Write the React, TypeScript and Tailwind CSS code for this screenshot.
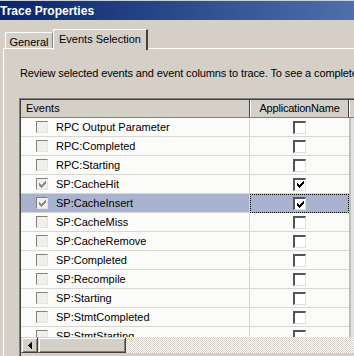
import React from "react";

const rows = [
  { name: "RPC Output Parameter", ev: false, app: false },
  { name: "RPC:Completed", ev: false, app: false },
  { name: "RPC:Starting", ev: false, app: false },
  { name: "SP:CacheHit", ev: true, app: true },
  { name: "SP:CacheInsert", ev: true, app: true, sel: true },
  { name: "SP:CacheMiss", ev: false, app: false },
  { name: "SP:CacheRemove", ev: false, app: false },
  { name: "SP:Completed", ev: false, app: false },
  { name: "SP:Recompile", ev: false, app: false },
  { name: "SP:Starting", ev: false, app: false },
  { name: "SP:StmtCompleted", ev: false, app: false },
  { name: "SP:StmtStarting", ev: false, app: false },
];

function Check({ color }: { color: string }) {
  return (
    <svg width="9" height="9" viewBox="0 0 9 9" shapeRendering="crispEdges">
      <path d="M1 3h1v1h1v1h1V4h1V3h1V2h1V1h1v3H7v1H6v1H5v1H4v1H3V7H2V6H1z" fill={color} />
    </svg>
  );
}

function EvBox({ checked }: { checked: boolean }) {
  return (
    <div className="w-[12px] h-[12px] border-t border-l border-[#808080] border-b border-r border-b-[#e4e4e4] border-r-[#e4e4e4] bg-[#f0efea] flex items-center justify-center">
      {checked && <Check color="#8a8a8a" />}
    </div>
  );
}

function AppBox({ checked }: { checked: boolean }) {
  return (
    <div className="w-[13px] h-[13px] border-t-2 border-l-2 border-t-[#555555] border-l-[#555555] border-b border-r border-b-[#e0e0e0] border-r-[#e0e0e0] bg-white flex items-center justify-center">
      {checked && <Check color="#000000" />}
    </div>
  );
}

export default function App() {
  return (
    <div className="w-[354px] h-[356px] bg-[#d4d0c8] overflow-hidden flex flex-col text-[11px] text-black font-['Liberation_Sans',Arial,sans-serif] leading-none">
      {/* title bar */}
      <div className="h-[20px] shrink-0 bg-gradient-to-r from-[#0a246a] to-[#4f70ab] border-t border-[#c8d0e0] flex items-center">
        <span className="text-white font-bold text-[12px] whitespace-nowrap">Trace Properties</span>
      </div>
      {/* tabs */}
      <div className="h-[29px] shrink-0 flex items-end pl-[5px] relative">
        <div className="h-[17px] w-[48px] border-t border-l border-white border-r border-r-[#808080] flex items-center justify-center pt-[3px]">
          General
        </div>
        <div className="h-[21px] w-[95px] -mb-px relative z-10 bg-[#d4d0c8] border-t border-l border-white border-r-2 border-r-[#404040] flex items-center justify-center pb-[1px]">
          Events Selection
        </div>
        <div className="flex-1 border-b border-white h-0" />
        <div className="absolute left-[3px] right-0 bottom-0 h-px bg-white" />
      </div>
      {/* panel */}
      <div className="flex-1 ml-[3px] border-l border-white flex flex-col min-h-0">
        <div className="h-[49px] shrink-0 flex items-center pl-[16px] whitespace-nowrap tracking-[-0.12px]">
          Review selected events and event columns to trace. To see a complete
        </div>
        {/* grid */}
        <div className="ml-[15px] border-t border-l border-[#808080] flex-1 min-h-0">
          <div className="border-t border-l border-[#404040] h-full flex flex-col">
            {/* header */}
            <div className="h-[18px] shrink-0 flex border-b border-[#808080]">
              <div className="w-[229px] shrink-0 border-r border-[#404040] flex items-center pl-[5px] bg-[#d4d0c8]">
                Events
              </div>
              <div className="w-[99px] shrink-0 border-l border-white border-r border-r-[#404040] flex items-center justify-center bg-[#d4d0c8] tracking-[-0.2px]">
                ApplicationName
              </div>
              <div className="flex-1 border-l border-white bg-[#d4d0c8]" />
            </div>
            {/* body */}
            <div className="h-[219px] shrink-0 overflow-hidden bg-[#fbfbf9]">
              {rows.map((r) => (
                <div key={r.name} className="h-[19px] flex">
                  <div
                    className={`w-[229px] shrink-0 border-b border-r border-[#d8d6d0] flex items-center pl-[15px] gap-[8px] ${
                      r.sel ? "bg-[#a9b3d0]" : ""
                    }`}
                  >
                    <EvBox checked={r.ev} />
                    <span className="whitespace-nowrap">{r.name}</span>
                  </div>
                  <div
                    className={`w-[99px] shrink-0 flex items-center justify-center ${
                      r.sel
                        ? "bg-[#a9b3d0] border border-dotted border-black"
                        : "border-b border-[#d8d6d0]"
                    }`}
                  >
                    <AppBox checked={r.app} />
                  </div>
                  <div className="w-[2px] bg-[#bdbdbd]" />
                  <div className="flex-1 bg-[#e4e2dc]" />
                </div>
              ))}
            </div>
            {/* horizontal scrollbar */}
            <div className="h-[16px] shrink-0 flex">
              <div className="w-[17px] h-[16px] bg-[#d4d0c8] border-t border-l border-[#d4d0c8] border-r border-b border-r-[#404040] border-b-[#404040] shadow-[inset_1px_1px_0_#ffffff,inset_-1px_-1px_0_#808080] flex items-center justify-center">
                <svg width="4" height="7" viewBox="0 0 4 7" shapeRendering="crispEdges">
                  <path d="M3 0h1v7H3V6H2V5H1V4H0V3h1V2h1V1h1z" fill="#000" />
                </svg>
              </div>
              <div className="w-[88px] h-[16px] bg-[#d4d0c8] border-t border-l border-[#d4d0c8] border-r border-b border-r-[#404040] border-b-[#404040] shadow-[inset_1px_1px_0_#ffffff,inset_-1px_-1px_0_#808080]" />
              <div className="flex-1 bg-[repeating-conic-gradient(#d4d0c8_0%_25%,#ffffff_0%_50%)] bg-[length:2px_2px]" />
            </div>
          </div>
        </div>
      </div>
    </div>
  );
}
